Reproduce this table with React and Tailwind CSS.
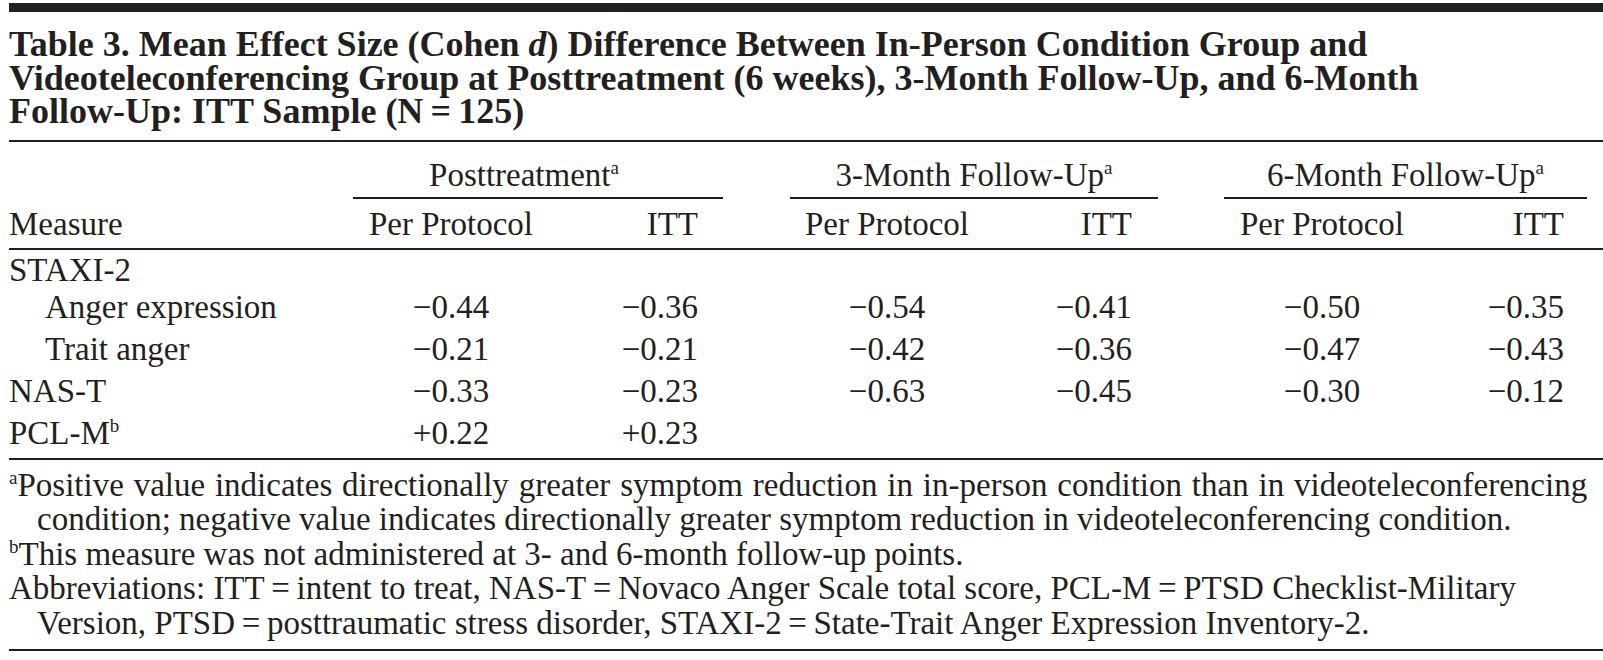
import React from "react";

const ff = { fontFamily: '"Liberation Serif", "Times New Roman", serif' };

const rows = [
  { label: "STAXI-2", indent: false, vals: null, first: true },
  { label: "Anger expression", indent: true, vals: ["−0.44", "−0.36", "−0.54", "−0.41", "−0.50", "−0.35"] },
  { label: "Trait anger", indent: true, vals: ["−0.21", "−0.21", "−0.42", "−0.36", "−0.47", "−0.43"] },
  { label: "NAS-T", indent: false, vals: ["−0.33", "−0.23", "−0.63", "−0.45", "−0.30", "−0.12"] },
  { label: "PCL-M", sup: "b", indent: false, vals: ["+0.22", "+0.23", "", "", "", ""] },
];

function Sup({ children }) {
  return <span className="text-[19px] relative -top-[12px] leading-none align-baseline">{children}</span>;
}

function Groups({ cells }) {
  return (
    <>
      <div className="w-[370px] shrink-0 flex">
        <div className="w-[196px] text-center">{cells[0]}</div>
        <div className="flex-1 text-right pr-[25px]">{cells[1]}</div>
      </div>
      <div className="w-[67px] shrink-0" />
      <div className="w-[368px] shrink-0 flex">
        <div className="w-[194px] text-center">{cells[2]}</div>
        <div className="flex-1 text-right pr-[26px]">{cells[3]}</div>
      </div>
      <div className="w-[66px] shrink-0" />
      <div className="w-[363px] shrink-0 flex">
        <div className="w-[196px] text-center">{cells[4]}</div>
        <div className="flex-1 text-right pr-[23px]">{cells[5]}</div>
      </div>
    </>
  );
}

export default function App() {
  return (
    <div style={ff} className="w-[1603px] h-[660px] overflow-hidden bg-white text-[#231f20] pl-[9px]">
      <div className="mt-[3px] h-[9px] bg-[#231f20]" />
      <h1 className="mt-[16px] text-[36px] leading-[33.5px] font-bold whitespace-nowrap">
        Table 3. Mean Effect Size (Cohen <i>d</i>) Difference Between In-Person Condition Group and
        <br />
        Videoteleconferencing Group at Posttreatment (6 weeks), 3-Month Follow-Up, and 6-Month
        <br />
        Follow-Up: ITT Sample (N{"\u2009"}={"\u2009"}125)
      </h1>
      <div className="mt-[11px] h-[2px] bg-[#231f20]" />

      <div className="text-[33px] whitespace-nowrap">
        {/* spanner row */}
        <div className="flex mt-[13px] leading-[40px]">
          <div className="w-[344px] shrink-0" />
          <div className="w-[370px] shrink-0">
            <div className="text-center pr-[28px]">
              Posttreatment<Sup>a</Sup>
            </div>
            <div className="mt-[2px] h-[2px] bg-[#231f20]" />
          </div>
          <div className="w-[67px] shrink-0" />
          <div className="w-[368px] shrink-0">
            <div className="text-center">
              3-Month Follow-Up<Sup>a</Sup>
            </div>
            <div className="mt-[2px] h-[2px] bg-[#231f20]" />
          </div>
          <div className="w-[66px] shrink-0" />
          <div className="w-[363px] shrink-0">
            <div className="text-center">
              6-Month Follow-Up<Sup>a</Sup>
            </div>
            <div className="mt-[2px] h-[2px] bg-[#231f20]" />
          </div>
        </div>

        {/* column header row */}
        <div className="flex mt-[5px] leading-[40px]">
          <div className="w-[344px] shrink-0">Measure</div>
          <Groups cells={["Per Protocol", "ITT", "Per Protocol", "ITT", "Per Protocol", "ITT"]} />
        </div>
        <div className="mt-[4px] h-[2px] bg-[#231f20]" />

        {/* data rows */}
        {rows.map((r) => (
          <div key={r.label} className={r.first ? "flex h-[36px] leading-[40px]" : "flex leading-[42px]"}>
            <div className={r.indent ? "w-[344px] shrink-0 pl-[36px]" : "w-[344px] shrink-0"}>
              {r.label}
              {r.sup ? <Sup>{r.sup}</Sup> : null}
            </div>
            <Groups cells={r.vals || ["", "", "", "", "", ""]} />
          </div>
        ))}
        <div className="mt-[4px] h-[2px] bg-[#231f20]" />

        {/* footnotes */}
        <div className="mt-[8px] leading-[34.5px] pl-[28px] -indent-[28px]">
          <span className="[word-spacing:1.6px]">
            <Sup>a</Sup>Positive value indicates directionally greater symptom reduction in in-person condition than in videoteleconferencing
          </span>
          <br />
          condition; negative value indicates directionally greater symptom reduction in videoteleconferencing condition.
        </div>
        <div className="leading-[34.5px]">
          <Sup>b</Sup>This measure was not administered at 3- and 6-month follow-up points.
        </div>
        <div className="leading-[34.5px] pl-[28px] -indent-[28px]">
          Abbreviations: ITT{"\u2009"}={"\u2009"}intent to treat, NAS-T{"\u2009"}={"\u2009"}Novaco Anger Scale total score, PCL-M{"\u2009"}={"\u2009"}PTSD Checklist-Military
          <br />
          Version, PTSD{"\u2009"}={"\u2009"}posttraumatic stress disorder, STAXI-2{"\u2009"}={"\u2009"}State-Trait Anger Expression Inventory-2.
        </div>
        <div className="mt-[9px] h-[2px] bg-[#231f20]" />
      </div>
    </div>
  );
}
